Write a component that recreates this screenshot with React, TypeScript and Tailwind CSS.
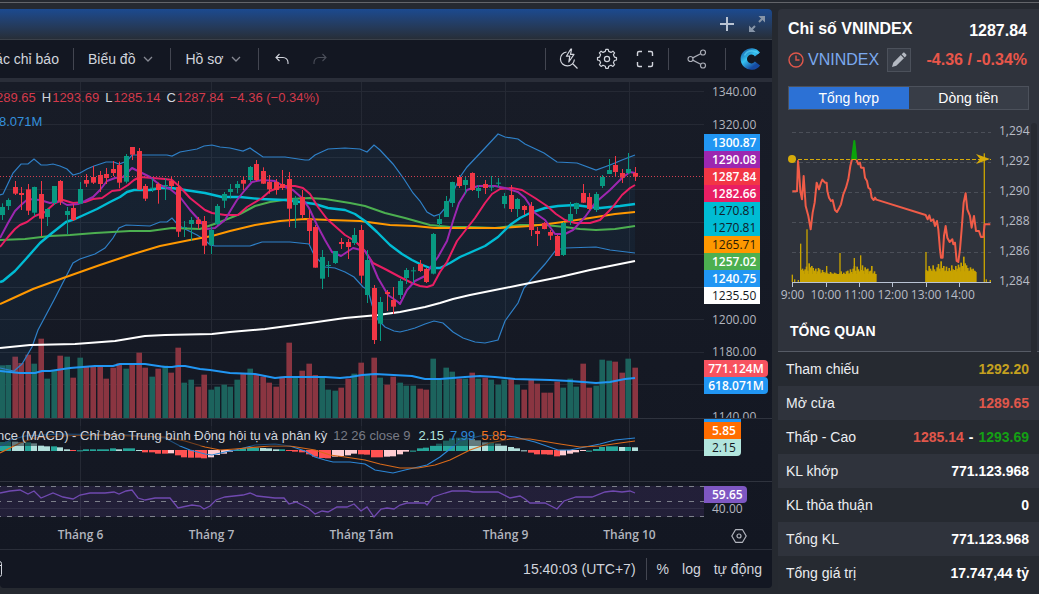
import React, { useState } from 'react';

type Bar = [high: number, top: number, bottom: number, low: number, up: 0 | 1];

/* Candles, volumes and histogram values are stored in thirds of a pixel */
const CANDLES: Bar[] = [
  [220, 231, 255, 270, 1], [205, 210, 228, 240, 1], [153, 171, 191, 195, 0], [171, 189, 195, 240, 0],
  [162, 178, 242, 255, 0], [170, 171, 248, 258, 1], [153, 192, 266, 318, 0], [235, 237, 261, 288, 1],
  [168, 168, 219, 225, 1], [150, 153, 215, 225, 0], [231, 243, 255, 312, 1], [222, 234, 270, 273, 0],
  [156, 177, 221, 221, 1], [132, 150, 161, 171, 0], [108, 141, 158, 162, 0], [123, 135, 162, 186, 0],
  [114, 132, 144, 162, 0], [93, 117, 129, 138, 0], [95, 105, 158, 175, 0], [72, 78, 155, 160, 1],
  [51, 51, 74, 90, 0], [54, 63, 179, 180, 0], [162, 168, 206, 213, 0], [145, 173, 176, 186, 1],
  [158, 162, 180, 221, 0], [145, 165, 168, 210, 1], [138, 153, 168, 178, 0], [153, 171, 305, 321, 0],
  [273, 291, 294, 321, 1], [261, 270, 282, 333, 1], [261, 269, 282, 297, 0], [258, 273, 347, 372, 0],
  [290, 300, 345, 372, 1], [222, 228, 282, 285, 1], [186, 192, 212, 234, 1], [162, 177, 186, 205, 1],
  [153, 162, 174, 190, 1], [138, 150, 161, 180, 0], [108, 111, 150, 156, 1], [90, 102, 150, 153, 0],
  [112, 123, 161, 162, 0], [135, 156, 178, 191, 0], [147, 156, 180, 194, 0], [120, 162, 174, 180, 0],
  [126, 147, 236, 291, 0], [198, 205, 225, 294, 1], [180, 201, 255, 265, 0], [240, 267, 303, 342, 0],
  [285, 291, 413, 413, 0], [360, 381, 446, 477, 1], [393, 405, 408, 441, 1], [363, 363, 399, 402, 1],
  [324, 336, 342, 357, 0], [327, 336, 351, 387, 0], [294, 315, 339, 345, 1], [285, 300, 437, 460, 0],
  [360, 390, 495, 519, 1], [465, 474, 630, 642, 0], [501, 516, 581, 633, 1], [480, 486, 492, 543, 0],
  [471, 510, 530, 552, 0], [447, 453, 495, 507, 1], [414, 420, 444, 462, 1], [411, 421, 424, 459, 1],
  [390, 402, 423, 426, 0], [414, 417, 456, 459, 0], [309, 312, 431, 433, 1], [255, 267, 282, 288, 1],
  [198, 213, 261, 261, 1], [155, 156, 219, 231, 1], [135, 141, 168, 174, 0], [141, 150, 165, 192, 1],
  [127, 129, 180, 183, 0], [165, 174, 183, 204, 1], [150, 162, 174, 192, 0], [138, 170, 173, 183, 1],
  [144, 158, 161, 172, 1], [189, 198, 222, 235, 1], [165, 195, 237, 246, 0], [204, 207, 237, 261, 1],
  [225, 228, 240, 255, 0], [216, 228, 300, 318, 0], [291, 303, 312, 348, 0], [276, 279, 297, 298, 0],
  [300, 306, 317, 330, 0], [315, 318, 378, 378, 0], [276, 279, 375, 378, 1], [216, 252, 273, 285, 1],
  [218, 219, 237, 252, 1], [162, 189, 218, 219, 0], [189, 201, 237, 240, 0], [186, 192, 240, 246, 1],
  [135, 141, 168, 174, 1], [87, 120, 132, 132, 1], [78, 105, 126, 141, 0], [117, 129, 143, 159, 0],
  [69, 117, 129, 132, 1], [111, 129, 140, 153, 0],
];

const VOLUMES = [
  158, 159, 184, 165, 190, 163, 238, 118, 141, 187, 184, 121, 181, 153, 155, 155, 118, 151, 164, 148,
  160, 196, 151, 124, 148, 157, 136, 211, 106, 115, 94, 130, 85, 94, 100, 94, 115, 133, 148, 130,
  124, 106, 94, 124, 226, 124, 142, 163, 129, 123, 85, 82, 91, 118, 133, 166, 129, 181, 121, 100,
  124, 106, 97, 97, 88, 85, 178, 115, 151, 139, 118, 118, 136, 118, 121, 115, 100, 115, 118, 100,
  85, 115, 103, 76, 76, 109, 91, 118, 94, 163, 91, 97, 175, 172, 169, 136, 178, 151,
];

const HISTOGRAM = [
  27, 29, 28, 26, 26, 23, 17, 14, 14, 11, 5, -2, 2, 5, 5, 5, 5, 8, 5, 8,
  8, 3, -7, -7, -11, -11, -10, -16, -22, -23, -23, -25, -22, -15, -11, -5, 3, 8, 9, 10,
  9, 8, 5, 5, -2, -5, -7, -13, -20, -24, -25, -20, -18, -16, -11, -13, -14, -22, -22, -20,
  -19, -13, -5, 1, 8, 10, 16, 22, 31, 38, 40, 40, 36, 32, 26, 26, 22, 17, 12, 8,
  2, -8, -13, -13, -14, -19, -16, -11, -7, -1, 1, 6, 12, 14, 14, 12, 12, 11,
];

const UPPER_BAND =
  '0,195 3,194 13,173 21,164 28,164 34,159 41,165 47,165 53,164 60,166 67,169 73,175 80,173 87,169 94,166 106,162 114,162 119,164 127,161 132,155 167,155 172,156 180,152 197,149 204,146 212,145 220,147 230,148 243,151 250,148 263,157 285,157 305,160 309,160 315,155 328,149 345,148 360,149 367,152 374,145 380,150 393,164 404,179 413,193 420,201 427,212 434,216 440,214 447,206 455,188 460,177 467,167 485,148 498,134 505,137 518,139 525,144 544,153 557,162 577,163 596,170 610,165 622,160 635,155';
const LOWER_BAND =
  '635,253 610,250 596,247 565,248 556,250 545,264 530,281 524,288 518,303 505,321 498,340 485,343 475,342 463,338 453,332 443,323 434,321 425,324 415,328 408,330 400,332 394,331 385,327 378,320 372,305 368,290 363,287 354,277 345,272 335,268 325,267 314,255 309,244 290,242 262,242 250,246 215,246 210,245 205,240 197,235 185,229 178,225 172,218 167,222 160,222 150,226 126,225 119,228 113,238 105,248 95,254 80,259 73,263 54,300 38,330 32,347 22,364 14,371 0,368';

const LINES = [
  { color: '#4caf50', width: 2, points: '0,240 25,239 50,236 70,235 95,233 130,231 150,231 172,228 200,229 220,222 240,214 255,206 270,202 290,199 310,198 325,199 350,203 365,206 385,213 405,218 430,225 450,227 470,227 495,228 520,225 545,225 565,227 580,229 596,230 615,229 635,226' },
  { color: '#ff9800', width: 2, points: '0,304 9,300 33,289 66,277 100,265 130,255 160,246 190,240 212,236 230,231 255,225 280,221 305,219 330,220 360,221 390,225 415,226 435,228 470,228 500,228 530,226 548,224 570,221 590,218 615,214 635,212' },
  { color: '#ffffff', width: 2, points: '0,348 30,345 75,344 115,341 145,336 165,335 212,334 230,332 265,329 310,323 345,318 378,315 400,312 425,307 440,303 453,299 470,295 485,292 520,285 560,277 590,270 635,261' },
  { color: '#00bcd4', width: 2.4, points: '0,282 3,281 15,271 25,260 40,243 52,233 66,222 75,219 97,209 110,202 120,197 127,192 134,190 150,190 160,188 172,188 185,190 205,193 222,197 240,197 260,199 285,200 300,202 315,204 328,208 345,210 355,214 365,221 377,232 390,245 402,254 412,260 420,264 430,268 440,268 450,263 460,257 485,246 498,237 510,225 520,218 530,213 545,208 558,206 575,205 590,207 600,208 620,206 635,204' },
  { color: '#e91e63', width: 2, points: '0,247 8,237 15,229 20,225 27,222 35,216 45,212 55,203 63,200 73,203 85,202 93,199 102,198 112,191 120,190 128,185 134,180 140,177 165,179 172,180 180,187 190,198 205,210 212,213 225,215 238,215 247,207 262,198 270,191 283,186 295,186 303,188 310,194 318,207 327,219 345,235 355,241 365,251 373,263 385,269 400,277 412,283 420,286 427,287 433,285 440,272 447,262 457,241 475,218 485,203 492,194 500,189 512,188 522,190 535,198 547,206 556,214 565,220 575,223 590,223 600,220 612,208 622,195 630,188 635,185' },
  { color: '#9c27b0', width: 2, points: '0,238 8,223 15,211 21,205 28,199 40,200 50,203 60,201 67,205 78,204 85,201 93,197 100,190 107,181 115,178 123,177 128,172 132,168 140,172 150,177 160,185 170,189 180,197 190,210 200,221 207,229 215,228 225,220 232,208 237,200 245,190 252,182 262,180 275,181 285,187 293,190 302,198 309,208 317,225 325,240 332,252 341,256 353,248 365,251 370,259 378,278 388,295 398,302 400,304 407,290 415,281 425,276 430,268 438,257 447,241 453,221 459,203 467,190 478,186 495,186 505,188 518,192 525,198 535,213 545,220 555,234 565,234 573,230 585,217 595,203 610,190 622,178 630,172 635,173' },
  { color: '#2196f3', width: 2, points: '0,371 20,373 35,373 42,371 50,371 70,368 95,366 113,366 120,364 145,364 165,367 172,367 178,366 185,366 200,369 210,370 230,373 255,374 275,378 285,377 300,377 325,377 340,378 350,377 362,375 375,374 412,376 425,379 440,379 465,377 480,376 495,377 515,379 550,380 570,381 596,383 610,382 625,379 635,378' },
];

const MACD_LINE =
  '0,447 10,440 25,436 60,434 130,435 165,438 180,446 190,450 205,454 212,455 225,452 240,449 255,445 275,444 290,446 305,451 315,457 325,460 333,462 350,462 365,464 375,470 393,473 405,470 427,465 440,457 450,449 460,441 480,436 500,435 515,437 535,442 558,450 570,450 585,447 600,444 615,440 635,438';
const SIGNAL_LINE =
  '0,453 10,448 20,443 35,438 60,436 100,435 165,437 185,441 205,447 220,450 235,449 270,446 290,446 315,450 330,455 345,457 365,460 380,464 400,468 418,468 435,465 450,460 470,450 490,443 510,439 530,439 560,444 580,447 600,446 620,443 635,441';
const RSI_LINE =
  '0,493 10,491 20,490 28,494 34,491 41,498 53,493 63,497 73,499 80,495 90,493 105,493 114,492 119,494 126,491 132,490 138,498 145,500 155,498 170,498 178,508 192,505 200,506 204,509 210,506 216,500 225,497 243,495 250,493 257,496 275,498 284,498 289,504 296,502 308,508 315,514 322,511 328,512 337,507 347,507 354,504 361,511 367,507 374,517 381,509 387,508 394,509 400,505 407,503 425,503 427,505 433,497 445,493 452,491 468,491 473,492 498,492 510,498 520,496 525,499 530,503 545,503 557,509 564,501 576,497 592,497 605,492 613,491 622,492 630,491 635,493';

const GRID_X = [80.5, 211.5, 361.5, 505.5, 629.5];
const GRID_Y = [91.5, 124.5, 157.5, 189.5, 222.5, 254.5, 287.5, 319.5, 352.5, 384.5, 450.5, 508.5];
const MONTHS = ['Tháng 6', 'Tháng 7', 'Tháng Tám', 'Tháng 9', 'Tháng 10'];

const barX = (i: number) => Math.round(1.6 + i * 6.53);

function histColor(i: number) {
  const v = HISTOGRAM[i];
  const prev = i ? HISTOGRAM[i - 1] : 0;
  if (v >= 0) return v >= prev ? '#26a69a' : '#b2dfdb';
  return v <= prev ? '#ff5252' : '#ffcdd2';
}

function PriceChart() {
  return (
    <svg className="block h-[467px] w-[704px] shrink-0 overflow-visible" viewBox="0 82 704 467" role="img" aria-label="VNINDEX">
      <g stroke="#252934">
        {GRID_X.map((x) => <path key={x} d={`M${x} 82V520`} />)}
        {GRID_Y.map((y) => <path key={y} d={`M0 ${y}H704`} />)}
      </g>

      {/* Volume */}
      {VOLUMES.map((v, i) => (
        <rect
          key={i}
          x={barX(i) - 2.6}
          y={418 - v / 3}
          width="5.6"
          height={v / 3}
          fill={CANDLES[i][4] ? '#1c635d' : '#8a3541'}
        />
      ))}

      {/* Bollinger bands */}
      <polygon points={`${UPPER_BAND} ${LOWER_BAND}`} fill="#2196f3" fillOpacity="0.06" />
      <polyline points={UPPER_BAND} fill="none" stroke="#2f80c8" strokeWidth="1.2" />
      <polyline points={LOWER_BAND} fill="none" stroke="#2f80c8" strokeWidth="1.2" />

      {LINES.map((l) => (
        <polyline key={l.color} points={l.points} fill="none" stroke={l.color} strokeWidth={l.width} strokeLinejoin="round" />
      ))}

      {CANDLES.map(([high, top, bottom, low, up], i) => {
        const x = barX(i);
        return (
          <g key={i} fill={up ? '#089981' : '#f23645'}>
            <rect x={x} y={130 + high / 3} width="1" height={(low - high) / 3} />
            <rect x={x - 2} y={130 + top / 3} width="5" height={(bottom - top) / 3} />
          </g>
        );
      })}
      <path d="M0 176.5H704" stroke="#d23f50" strokeDasharray="1 2" />

      {/* MACD */}
      <path d="M0 418.5H704M0 481.5H704" stroke="#2f333e" />
      {HISTOGRAM.map((v, i) => (
        <rect
          key={i}
          x={barX(i) - 3}
          y={v > 0 ? 451 - v / 3 : 450}
          width="6"
          height={Math.max(1, Math.abs(v) / 3)}
          fill={histColor(i)}
        />
      ))}
      <polyline points={MACD_LINE} fill="none" stroke="#2c86d6" strokeWidth="1.2" />
      <polyline points={SIGNAL_LINE} fill="none" stroke="#d96a1a" strokeWidth="1.2" />

      {/* RSI */}
      <rect x="0" y="486" width="704" height="31" fill="#7e57c2" fillOpacity="0.14" />
      <path d="M-4 486.5H704M-4 501.5H704M-4 516.5H704" stroke="#7d808b" strokeDasharray="5 6" />
      <polyline points={RSI_LINE} fill="none" stroke="#7049b0" strokeWidth="1.3" />

      <g fill="#b2b5be" fontSize="12" fontWeight="600" textAnchor="middle" className="font-['Open_Sans',sans-serif]">
        {MONTHS.map((m, i) => (
          <text key={m} x={GRID_X[i]} y="539">{m}</text>
        ))}
      </g>
    </svg>
  );
}

const PRICE_TAGS = [
  { value: '1300.87', className: 'bg-[#2196f3] text-white font-semibold' },
  { value: '1290.08', className: 'bg-[#9c27b0] text-white font-semibold' },
  { value: '1287.84', className: 'bg-[#f23645] text-white font-semibold' },
  { value: '1282.66', className: 'bg-[#e91e63] text-white font-semibold' },
  { value: '1270.81', className: 'bg-[#00bcd4] text-[#10202a]' },
  { value: '1270.81', className: 'bg-[#00bcd4] text-[#10202a]' },
  { value: '1265.71', className: 'bg-[#ff9800] text-[#2a1c06]' },
  { value: '1257.02', className: 'bg-[#4caf50] text-white font-semibold' },
  { value: '1240.75', className: 'bg-[#2196f3] text-white font-semibold' },
  { value: '1235.50', className: 'bg-white text-[#131722]' },
];

function PriceAxis() {
  return (
    <div className="w-[68px] shrink-0 font-['Open_Sans',sans-serif] text-xs leading-[17px] text-[#b2b5be]">
      <div className="h-[336px] overflow-hidden pt-px">
        <p className="pl-2">1340.00</p>
        <p className="mt-4 pl-2">1320.00</p>
        <ul className="mt-px w-14">
          {PRICE_TAGS.map((tag, i) => (
            <li key={i} className={`pl-2 ${tag.className}`}>{tag.value}</li>
          ))}
        </ul>
        <p className="mt-[7px] pl-2">1200.00</p>
        <p className="mt-[15px] pl-2">1180.00</p>
        <div className="w-16 text-center font-semibold text-white">
          <p className="rounded-r-sm bg-[#f7525f]">771.124M</p>
          <p className="rounded-r-sm bg-[#2196f3]">618.071M</p>
        </div>
        <p className="mt-[14px] pl-2">1140.00</p>
      </div>
      <div className="h-[63px] border-t border-[#2f333e]">
        <div className="h-[3px] w-[37px] bg-[#2196f3]" />
        <p className="w-[37px] bg-[#ff6d00] pl-2 font-semibold text-white">5.85</p>
        <p className="w-[37px] rounded-br-sm bg-[#b2e5dd] pl-2 text-[#131722]">2.15</p>
      </div>
      <div className="border-t border-[#2f333e] pt-1">
        <p className="w-[43px] rounded-r-sm bg-[#7e57c2] pl-2 font-semibold text-white">59.65</p>
        <p className="pl-2 leading-3">40.00</p>
      </div>
      <button type="button" aria-label="Cài đặt" className="ml-[27px] mt-[13px] block">
        <svg className="size-4" viewBox="0 0 16 16" fill="none" stroke="#b2b5be" strokeWidth="1.2">
          <path d="M4.5 1.7h7L15.2 8l-3.7 6.3h-7L.8 8z" strokeLinejoin="round" />
          <circle cx="8" cy="8" r="2" />
        </svg>
      </button>
    </div>
  );
}

function Divider() {
  return <div className="h-[22px] w-px shrink-0 bg-[#434651]" />;
}

function Chevron() {
  return (
    <svg className="h-[6px] w-[10px]" viewBox="0 0 10 6" fill="none" stroke="#868993" strokeWidth="1.3">
      <path d="M1 1l4 4 4-4" />
    </svg>
  );
}

function Toolbar() {
  return (
    <div className="flex h-[38px] items-center justify-between bg-[#131722] text-sm text-[#d1d4dc]">
      <div className="flex items-center whitespace-nowrap">
        <button type="button" className="-ml-[15px] pr-[14px]">Các chỉ báo</button>
        <Divider />
        <button type="button" className="flex items-center gap-2 pl-[14px] pr-[17px]">
          Biểu đồ <Chevron />
        </button>
        <Divider />
        <button type="button" className="flex items-center gap-2 pl-[14px] pr-[17px]">
          Hồ sơ <Chevron />
        </button>
        <Divider />
        <button type="button" aria-label="Hoàn tác" className="ml-4">
          <svg className="h-3 w-[14px]" viewBox="0 0 14 12" fill="none" stroke="#d1d4dc" strokeWidth="1.1">
            <path d="M4.5 1L1 4.5 4.5 8M1 4.5h7a5 5 0 0 1 5 5V11" />
          </svg>
        </button>
        <button type="button" aria-label="Làm lại" className="ml-6">
          <svg className="h-3 w-[14px]" viewBox="0 0 14 12" fill="none" stroke="#4a4e59" strokeWidth="1.1">
            <path d="M9.5 1L13 4.5 9.5 8M13 4.5H6a5 5 0 0 0-5 5V11" />
          </svg>
        </button>
      </div>

      <div className="flex items-center">
        <Divider />
        <div className="mx-1 flex">
          <button type="button" aria-label="Tìm nhanh" className="flex w-[38px] justify-center">
            <svg className="size-[22px]" viewBox="0 0 22 22" fill="none" stroke="#d1d4dc" strokeWidth="1.2">
              <path d="M8.6 4A7 7 0 1 0 16.4 11.5M14.5 15.5l5 5" />
              <path d="M12.8 1L8.4 8.2h3.4L10.8 14 16 6.4h-3.5L13.6 1z" strokeLinejoin="round" />
            </svg>
          </button>
          <button type="button" aria-label="Thiết lập" className="flex w-[38px] justify-center">
            <svg className="size-[22px]" viewBox="0 0 22 22" fill="none" stroke="#d1d4dc" strokeWidth="1.2" strokeLinejoin="round">
              <path d="M9.3 3.4l.5-2.1h2.4l.5 2.1 2.3 1 1.9-1.2 1.7 1.7-1.2 1.9 1 2.3 2.1.5v2.4l-2.1.5-1 2.3 1.2 1.9-1.7 1.7-1.9-1.2-2.3 1-.5 2.1H9.8l-.5-2.1-2.3-1-1.9 1.2-1.7-1.7 1.2-1.9-1-2.3-2.1-.5V9.6l2.1-.5 1-2.3-1.2-1.9 1.7-1.7L7 4.4z" />
              <circle cx="11" cy="11" r="2.6" />
            </svg>
          </button>
          <button type="button" aria-label="Toàn màn hình" className="flex w-[38px] justify-center">
            <svg className="size-[22px]" viewBox="0 0 22 22" fill="none" stroke="#d1d4dc" strokeWidth="1.4">
              <path d="M3.500 8V5a1.500 1.500 0 0 1 1.500-1.500h3M14 3.500h3A1.500 1.500 0 0 1 18.500 5v3M18.500 14v3a1.500 1.500 0 0 1-1.500 1.500h-3M8 18.500H5A1.500 1.500 0 0 1 3.500 17v-3" />
            </svg>
          </button>
        </div>
        <Divider />
        <button type="button" aria-label="Chia sẻ" className="flex w-14 justify-center">
          <svg className="size-[22px]" viewBox="0 0 22 22" fill="none" stroke="#a9acb6" strokeWidth="1.2">
            <circle cx="4.500" cy="11" r="2.500" />
            <circle cx="17" cy="4.500" r="2.500" />
            <circle cx="17" cy="17.500" r="2.500" />
            <path d="M6.700 9.900l8-4.200M6.700 12.100l8 4.200" />
          </svg>
        </button>
        <Divider />
        <a href="#" aria-label="Trang chủ" className="ml-[14px] mr-[10px]">
          <svg className="size-[22px]" viewBox="0 0 22 22" fill="none">
            <defs>
              <linearGradient id="ring" x1="0" y1="0" x2="0.7" y2="1">
                <stop offset="0" stopColor="#1b6fb4" />
                <stop offset="0.45" stopColor="#35c3f2" />
                <stop offset="1" stopColor="#1549a0" />
              </linearGradient>
            </defs>
            <path d="M17.500 6.500A7.600 7.600 0 1 0 17.500 15.500" stroke="url(#ring)" strokeWidth="6.400" />
            <path d="M4.500 7.500C6 4.500 9 2.500 13 3c3 .4 4.500 1.500 5.500 2.800" stroke="#5bd6fa" strokeWidth="1.600" opacity="0.600" />
          </svg>
        </a>
      </div>
    </div>
  );
}

function ChartPanel() {
  return (
    <section className="min-w-0 flex-1 self-start overflow-hidden rounded-b rounded-tr bg-[#131722]">
      <header className="flex h-[31px] items-center justify-end gap-[15px] border-b border-[#3a4049] bg-linear-to-b from-[#1b4a90] to-[#272e38] pr-[7px]">
        <button type="button" aria-label="Thêm">
          <svg className="size-[14px]" viewBox="0 0 14 14" stroke="#b9c3d2" strokeWidth="2">
            <path d="M7 0v14M0 7h14" />
          </svg>
        </button>
        <button type="button" aria-label="Mở rộng">
          <svg className="size-4" viewBox="0 0 16 16" fill="#8795a8" stroke="#8795a8" strokeWidth="2">
            <path d="M10 6l4-4M6 10l-4 4" />
            <path d="M9.500 0H16v6.500zM0 9.500V16h6.500z" stroke="none" />
          </svg>
        </button>
      </header>

      <Toolbar />

      <div className="relative flex justify-end overflow-hidden border-t-4 border-[#2a2e39] bg-linear-to-b from-[#181c27] to-[#131722]">
        <PriceChart />
        <PriceAxis />
        <div className="absolute left-[-4px] top-2 whitespace-nowrap text-[13px] leading-4 text-[#d33a4b]">
          <p className="flex gap-[6px]">
            <span>289.65</span>
            <span><span className="mr-px text-[#d1d4dc]">H</span>1293.69</span>
            <span><span className="mr-px text-[#d1d4dc]">L</span>1285.14</span>
            <span><span className="mr-px text-[#d1d4dc]">C</span>1287.84</span>
            <span>−4.36 (−0.34%)</span>
          </p>
          <p className="mt-2 pl-[3px] text-[#3490dc]">8.071M</p>
        </div>
        <p className="absolute left-[-3px] top-[344px] flex gap-[6px] whitespace-nowrap bg-[#131722]/50 text-[13px] leading-5">
          <span className="text-[#d1d4dc]">nce (MACD) - Chỉ báo Trung bình Động hội tụ và phân kỳ</span>
          <span className="mr-[2px] text-[#787b86]">12 26 close 9</span>
          <span className="text-[#b2e5dd]">2.15</span>
          <span className="text-[#2c86d6]">7.99</span>
          <span className="text-[#f0741e]">5.85</span>
        </p>
      </div>

      <footer className="flex h-[39px] items-center justify-between border-t border-[#2a2e39] text-sm text-[#d1d4dc]">
        <button type="button" aria-label="Đi đến ngày" className="-ml-[14px]">
          <svg className="size-4" viewBox="0 0 16 16" fill="none" stroke="#d1d4dc">
            <rect x="0.5" y="0.5" width="15" height="15" rx="2" />
            <path d="M1 4.500h14" />
          </svg>
        </button>
        <div className="flex items-center pr-[10px]">
          <button type="button" className="mr-[10px]">15:40:03 (UTC+7)</button>
          <Divider />
          <button type="button" className="ml-[10px]">%</button>
          <button type="button" className="ml-[13px]">log</button>
          <button type="button" className="ml-[13px]">tự động</button>
        </div>
      </footer>
    </section>
  );
}

const MORNING = [32, 36, 30, 34, 42, 30, 52, 40, 44, 38, 30, 36, 28, 38, 34, 24, 32, 26, 24, 28, 22, 20, 26, 22, 18, 24, 22, 20, 16, 22, 28, 20, 24, 18, 28, 30, 22, 34, 26, 36, 44, 30, 42, 34, 28, 32, 46, 30, 40, 34, 36, 28, 30, 44, 22, 28, 20];
const AFTERNOON = [32, 28, 44, 36, 30, 46, 34, 26, 40, 50, 36, 58, 38, 44, 30, 42, 28, 38, 30, 46, 34, 32, 44, 36, 48, 40, 54, 44, 72, 52, 46, 38, 30, 40, 34, 36, 30, 26];
const SPIKES = [[52, 22], [59, 8], [70, 6], [77, 115], [96, 158], [155, 48], [195, 87], [238, 72], [257, 80], [453, 90], [634, 8], [646, 6]];
const HOURS = ['9:00', '10:00', '11:00', '12:00', '13:00', '14:00'];
const LEVELS = ['1,294', '1,292', '1,290', '1,288', '1,286', '1,284'];

function IntradayChart() {
  return (
    <svg className="mt-[11px] block h-[182px] w-[253px] overflow-visible" viewBox="0 0 253 182" role="img" aria-label="VNINDEX trong ngày">
      <path d="M14 11.500H213M14 41.500H213M14 71.500H213M14 101.500H213M14 131.500H213" stroke="#4b4f58" strokeDasharray="4 3" />
      <g transform="translate(-3 -5) scale(0.3333)">
        <g fill="#c8a300">
          <rect x="76" y="474" width="227" height="24" />
          <rect x="452" y="466" width="151" height="32" />
          {MORNING.map((h, i) => <rect key={i} x={76 + i * 4} y={494 - h} width="5" height={h + 4} />)}
          {AFTERNOON.map((h, i) => <rect key={i} x={452 + i * 4} y={494 - h} width="5" height={h + 4} />)}
          {SPIKES.map(([x, h]) => <rect key={x} x={x - 2} y={498 - h} width="4" height={h} />)}
          <rect x="626" y="112" width="4" height="386" />
        </g>
        <g fill="none" strokeWidth="6" strokeLinejoin="round">
          <path d="M52 226H66L69 135 72 165 76 225 81 250 86 180 92 270 100 300 107 340 113 290 119 260 125 200 132 220 138 200 142 191 150 200 155 200 157 225 162 245 168 255 173 252 180 282 186 288 193 275 198 265 205 235 213 215 220 190 226 150 231 130" stroke="#f05c48" />
          <path d="M244 130L250 145 255 140 258 155 266 155 270 185 276 195 280 215 286 220 290 245 296 252 300 245 304 251 452 297 458 310 463 298 468 315 475 310 480 330 486 315 490 340 495 400 498 425 503 425 507 360 512 330 517 365 524 378 532 370 535 385 540 380 545 435 550 438 555 400 560 340 566 260 572 232 577 280 585 300 590 335 597 300 603 345 612 345 618 363 625 363 629 325 646 325" stroke="#f05c48" />
          <path d="M231 130L238 75 244 130" stroke="#0ba30b" fill="#0ba30b" />
        </g>
      </g>
      <path d="M14 38.500H213" stroke="#d6ab0a" strokeDasharray="4 2" />
      <circle cx="14" cy="38" r="4" fill="#d6ab0a" />
      <path d="M198 33l14 5-14 5 4-5z" fill="#d6ab0a" />
      <path d="M14 161.500H213M14.500 161v5M48.500 161v5M81.500 161v5M114.500 161v5M148.500 161v5M181.500 161v5" stroke="#b9c3d3" />
      <g fill="#b8bcc6" fontSize="12" className="font-['Open_Sans',sans-serif]">
        {HOURS.map((h, i) => (
          <text key={h} x={14.5 + i * 33.4} y="178" textAnchor="middle">{h}</text>
        ))}
        {LEVELS.map((l, i) => (
          <text key={l} x="221" y={14 + i * 30}>{l}</text>
        ))}
      </g>
    </svg>
  );
}

const OVERVIEW = [
  { label: 'Tham chiếu', value: <span className="text-[#c4a01f]">1292.20</span> },
  { label: 'Mở cửa', value: <span className="text-[#e0574b]">1289.65</span> },
  {
    label: 'Thấp - Cao',
    value: (
      <>
        <span className="text-[#e0574b]">1285.14</span>
        <span className="px-[5px]">-</span>
        <span className="text-[#14a014]">1293.69</span>
      </>
    ),
  },
  { label: 'KL khớp', value: '771.123.968' },
  { label: 'KL thỏa thuận', value: '0' },
  { label: 'Tổng KL', value: '771.123.968' },
  { label: 'Tổng giá trị', value: '17.747,44 tỷ' },
];

function IndexPanel() {
  const [tab, setTab] = useState('Tổng hợp');

  return (
    <aside className="relative w-[261px] shrink-0 self-start rounded-tl bg-[#2f333c] text-sm text-[#eceef1]">
      <div className="pl-[10px] pr-3 pt-2">
        <div className="flex items-center justify-between text-base font-bold leading-5 text-white">
          <h1>Chỉ số VNINDEX</h1>
          <span className="pt-1">1287.84</span>
        </div>
        <div className="mt-[7px] flex items-center text-base">
          <svg className="size-4" viewBox="0 0 16 16" fill="none" stroke="#e0574b" strokeWidth="1.4">
            <circle cx="8" cy="8" r="7" />
            <path d="M8 3.500V8h3.500" />
          </svg>
          <a href="#" className="ml-1 text-[#7ba9ee]">VNINDEX</a>
          <button type="button" aria-label="Sửa" className="ml-2 flex size-6 items-center justify-center border border-[#4c515b] bg-[#383d47]">
            <svg className="size-4" viewBox="0 0 16 16" fill="#b4b9c2">
              <path d="M1 15l1.200-4.300 7.600-7.600 3.100 3.100-7.600 7.600zM10.600 2.300L12 .9c.5-.5 1.200-.5 1.700 0l1.400 1.400c.5.5.5 1.200 0 1.700l-1.400 1.400z" />
            </svg>
          </button>
          <span className="ml-auto font-bold text-[#e8564a]">-4.36 / -0.34%</span>
        </div>
      </div>

      <div className="mx-[10px] mt-[14px] grid h-6 grid-cols-2 border border-[#4c515b]" role="tablist">
        {['Tổng hợp', 'Dòng tiền'].map((name) => (
          <button
            key={name}
            type="button"
            role="tab"
            aria-selected={tab === name}
            onClick={() => setTab(name)}
            className={`leading-[22px] text-white ${tab === name ? 'bg-[#2c71d5]' : 'bg-[#383d47]'}`}
          >
            {name}
          </button>
        ))}
      </div>

      <IntradayChart />

      <h2 className="mt-[18px] px-3 pb-[10px] font-bold text-white">TỔNG QUAN</h2>
      <table className="w-full border-t border-[#565b65]">
        <tbody>
          {OVERVIEW.map((row) => (
            <tr key={row.label} className="h-[34px] odd:bg-[#262a31]">
              <th scope="row" className="pl-2 text-left font-normal">{row.label}</th>
              <td className="whitespace-nowrap pr-[10px] text-right font-bold text-white">{row.value}</td>
            </tr>
          ))}
        </tbody>
      </table>
      {/* Scroll thumb */}
      <div className="absolute right-[2px] top-[114px] h-[235px] w-[6px] rounded-full bg-[#272a31]" />
    </aside>
  );
}

export default function App() {
  return (
    <div className="min-h-screen overflow-hidden bg-[#252930] font-['Liberation_Sans',Arial,sans-serif]">
      <div className="h-[3px] border-b border-[#63656a]" />
      <main className="flex gap-[6px] pt-[6px]">
        <ChartPanel />
        <IndexPanel />
      </main>
    </div>
  );
}
